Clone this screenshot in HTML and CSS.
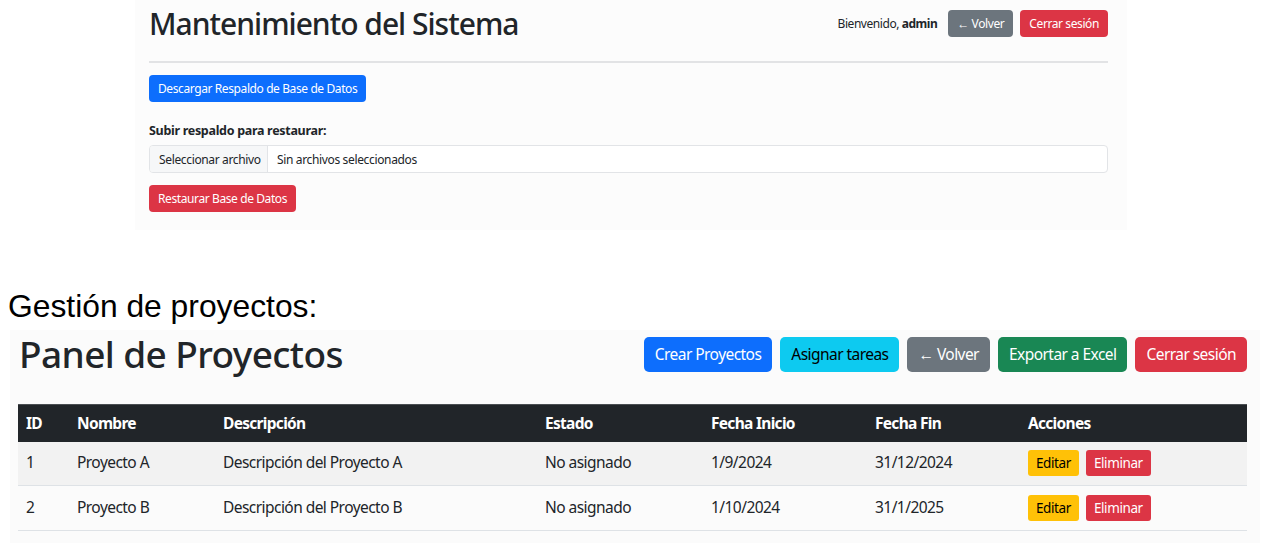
FILE: index.html
```html
<!DOCTYPE html>
<html lang="es">
<head>
<meta charset="utf-8">
<title>Mantenimiento</title>
<link rel="stylesheet" href="styles.css">
</head>
<body>
<section class="maint">
  <header class="maint-head">
    <h1 class="maint-title">Mantenimiento del Sistema</h1>
    <div class="maint-user">
      <span class="welcome">Bienvenido, <strong>admin</strong></span>
      <button class="btn-s gray">← Volver</button>
      <button class="btn-s red">Cerrar sesión</button>
    </div>
  </header>
  <hr class="maint-rule">
  <button class="btn-s blue">Descargar Respaldo de Base de Datos</button>
  <div class="upload-label">Subir respaldo para restaurar:</div>
  <div class="file-input">
    <span class="file-btn">Seleccionar archivo</span>
    <span class="file-name">Sin archivos seleccionados</span>
  </div>
  <button class="btn-s red">Restaurar Base de Datos</button>
</section>

<p class="caption">Gestión de proyectos:</p>

<section class="panel">
  <header class="panel-head">
    <h1 class="panel-title">Panel de Proyectos</h1>
    <div class="panel-actions">
      <button class="btn blue">Crear Proyectos</button>
      <button class="btn cyan">Asignar tareas</button>
      <button class="btn gray">← Volver</button>
      <button class="btn green">Exportar a Excel</button>
      <button class="btn red">Cerrar sesión</button>
    </div>
  </header>
  <table class="grid">
    <colgroup>
      <col class="c-id"><col class="c-name"><col class="c-desc"><col class="c-state"><col class="c-start"><col class="c-end"><col class="c-act">
    </colgroup>
    <thead>
      <tr><th>ID</th><th>Nombre</th><th>Descripción</th><th>Estado</th><th>Fecha Inicio</th><th>Fecha Fin</th><th>Acciones</th></tr>
    </thead>
    <tbody>
      <tr class="odd"><td>1</td><td>Proyecto A</td><td>Descripción del Proyecto A</td><td>No asignado</td><td>1/9/2024</td><td>31/12/2024</td><td><span class="acts"><button class="btn-x yellow">Editar</button><button class="btn-x red">Eliminar</button></span></td></tr>
      <tr class="even"><td>2</td><td>Proyecto B</td><td>Descripción del Proyecto B</td><td>No asignado</td><td>1/10/2024</td><td>31/1/2025</td><td><span class="acts"><button class="btn-x yellow">Editar</button><button class="btn-x red">Eliminar</button></span></td></tr>
    </tbody>
  </table>
</section>
</body>
</html>
```

FILE: styles.css
```css
* { box-sizing: border-box; }
html, body { margin: 0; padding: 0; background: #ffffff; }
body {
  font-family: "Noto Sans", "Open Sans", sans-serif;
  color: #212529;
  width: 1268px;
  height: 543px;
  overflow: hidden;
}
button { font-family: inherit; cursor: pointer; white-space: nowrap; }

/* ---------- top: maintenance ---------- */
.maint {
  margin-left: 135px;
  width: 992px;
  height: 230px;
  background: #fcfcfc;
  padding: 0 19px 0 14px;
  display: flex;
  flex-direction: column;
  align-items: flex-start;
}
.maint-head {
  width: 100%;
  height: 47px;
  display: flex;
  justify-content: space-between;
  align-items: center;
}
.maint-title {
  margin: 0;
  font-size: 30px;
  font-weight: 500;
  letter-spacing: -1px;
  line-height: 1.2;
}
.maint-user { display: flex; align-items: center; gap: 7px; }
.welcome { font-size: 12px; margin-right: 4px; letter-spacing: -0.45px; }
.welcome strong { font-weight: 700; }
.maint-rule {
  width: 100%;
  margin: 14px 0 12px;
  border: 0;
  border-top: 2px solid #e2e3e5;
}
.btn-s {
  height: 27px;
  border: 0;
  border-radius: 4px;
  padding: 0 9px;
  font-size: 12px;
  letter-spacing: -0.4px;
  color: #fff;
}
.upload-label {
  margin-top: 20px;
  font-size: 12.5px;
  font-weight: 700;
  letter-spacing: -0.3px;
}
.file-input {
  margin: 6px 0 12px;
  width: 100%;
  height: 28px;
  border: 1px solid #e2e4e7;
  border-radius: 4px;
  display: flex;
  align-items: stretch;
  font-size: 12px;
  letter-spacing: -0.35px;
  background: #fff;
  overflow: hidden;
  white-space: nowrap;
}
.file-btn {
  display: flex;
  align-items: center;
  padding: 0 9px;
  background: #f6f7f8;
  border-right: 1px solid #e2e4e7;
  width: 118px;
}
.file-name { display: flex; align-items: center; padding-left: 9px; }

/* ---------- caption ---------- */
.caption {
  margin: 53px 0 0 8px;
  height: 47px;
  font-family: "Liberation Sans", Arial, sans-serif;
  font-size: 31.8px;
  line-height: 46px;
  color: #000;
}

/* ---------- panel ---------- */
.panel {
  margin-left: 10px;
  width: 1250px;
  height: 213px;
  background: #fbfbfb;
  padding: 0 13px 0 8px;
}
.panel-head {
  display: flex;
  justify-content: space-between;
  align-items: center;
  height: 48px;
}
.panel-title {
  margin: 0;
  font-size: 37px;
  font-weight: 500;
  letter-spacing: -0.6px;
  line-height: 1.2;
  padding-left: 1px;
}
.panel-actions { display: flex; gap: 8px; }
.btn {
  height: 35px;
  border: 0;
  border-radius: 5px;
  padding: 0 11px;
  font-size: 15.5px;
  letter-spacing: -0.55px;
  color: #fff;
}
.blue { background: #0d6efd; color: #fff; }
.cyan { background: #0dcaf0; color: #000; }
.gray { background: #6c757d; color: #fff; }
.green { background: #198754; color: #fff; }
.red { background: #dc3545; color: #fff; }
.yellow { background: #ffc107; color: #000; }

.grid {
  margin-top: 26px;
  width: 1229px;
  border-collapse: collapse;
  table-layout: fixed;
  font-size: 15.5px;
  letter-spacing: -0.55px;
}
.c-id { width: 51px; }
.c-name { width: 146px; }
.c-desc { width: 322px; }
.c-state { width: 166px; }
.c-start { width: 164px; }
.c-end { width: 153px; }
.c-act { width: 227px; }
.grid th {
  background: #212529;
  color: #fff;
  font-weight: 700;
  text-align: left;
  height: 37px;
  padding: 0 8px 1px;
  border-top: 1px solid #4a4e52;
  letter-spacing: -0.7px;
}
.grid td {
  height: 44px;
  padding: 0 8px 2px;
  border-bottom: 1px solid #dee2e6;
  vertical-align: middle;
}
.grid tr.odd td { background: #f2f2f2; }
.grid tr.even td { background: #fbfbfb; height: 45px; }
.acts { display: flex; gap: 7px; padding-top: 1px; }
.btn-x {
  height: 26px;
  border: 0;
  border-radius: 3px;
  padding: 0 8px;
  font-size: 13.5px;
  letter-spacing: -0.4px;
}
```
